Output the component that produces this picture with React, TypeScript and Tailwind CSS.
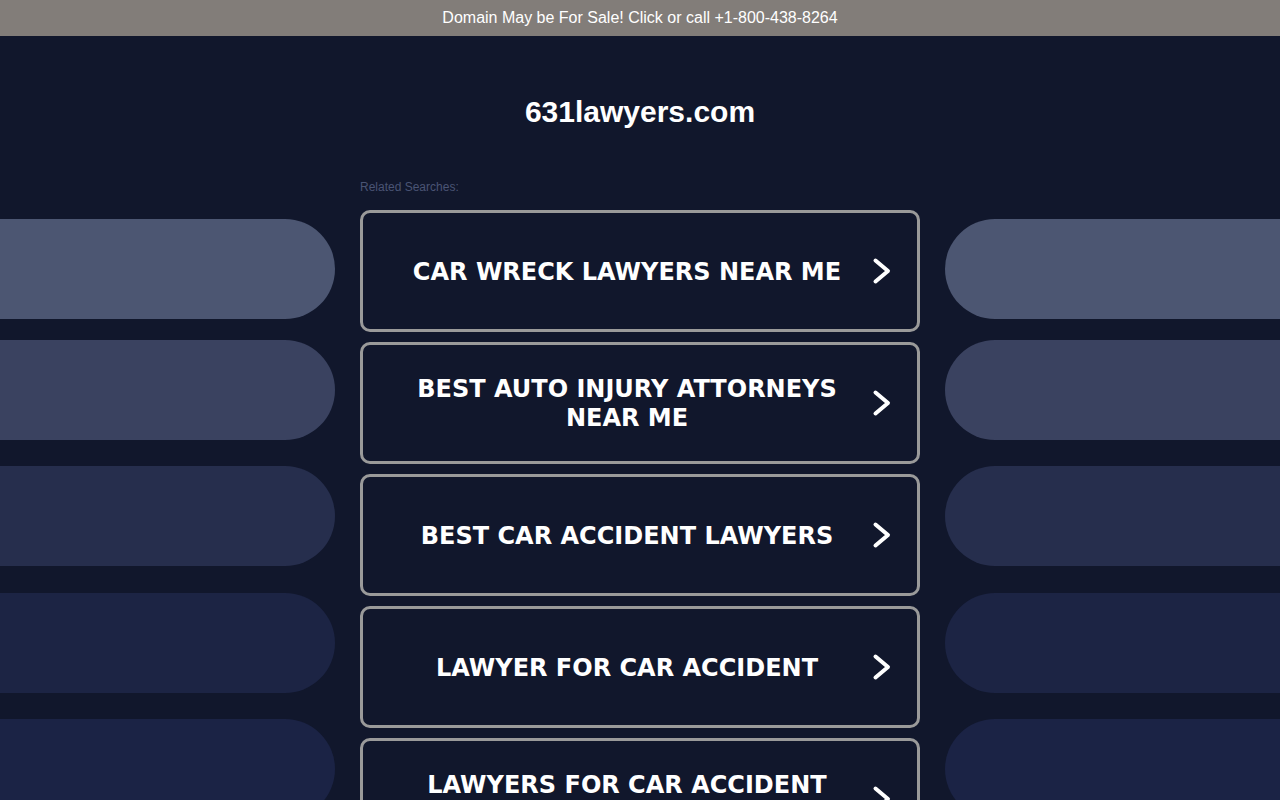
const searches = [
  "CAR WRECK LAWYERS NEAR ME",
  "BEST AUTO INJURY ATTORNEYS NEAR ME",
  "BEST CAR ACCIDENT LAWYERS",
  "LAWYER FOR CAR ACCIDENT",
  "LAWYERS FOR CAR ACCIDENT INJURIES",
];

const pills = [
  "mt-[42px] bg-[#4c5672]",
  "mt-[21px] bg-[#3a4260]",
  "mt-[26px] bg-[#262e4d]",
  "mt-[27px] bg-[#1c2444]",
  "mt-[26px] bg-[#1b2345]",
];

function Chevron() {
  return (
    <svg width="20" height="30" viewBox="0 0 20 30" className="shrink-0">
      <polyline
        points="4.5,4.5 17,15 4.5,25.5"
        fill="none"
        stroke="#ffffff"
        strokeWidth="4"
        strokeLinecap="round"
        strokeLinejoin="round"
      />
    </svg>
  );
}

function SidePills({ side }: { side: "left" | "right" }) {
  return (
    <div className="flex flex-1 flex-col">
      {pills.map((cls, i) => (
        <div
          key={i}
          className={`h-[100px] w-full shrink-0 ${cls} ${
            side === "left" ? "rounded-r-[50px]" : "rounded-l-[50px]"
          }`}
        />
      ))}
    </div>
  );
}

export default function App() {
  return (
    <div className="min-h-screen overflow-hidden bg-[#11172c] font-['Liberation_Sans',Arial,sans-serif]">
      <div className="flex h-[36px] items-center justify-center bg-[#827d79] text-[16px] text-white">
        Domain May be For Sale! Click or call +1-800-438-8264
      </div>

      <h1 className="mt-[58px] text-center text-[30px] font-bold leading-[36px] text-white">
        631lawyers.com
      </h1>

      <div className="mt-[47px] flex gap-[25px]">
        <SidePills side="left" />

        <div className="flex w-[560px] shrink-0 flex-col">
          <p className="text-[12px] leading-[20px] text-[#4a5474]">Related Searches:</p>
          <div className="mt-[13px] flex flex-col gap-[10px]">
            {searches.map((s) => (
              <a
                key={s}
                href="#"
                className="flex h-[122px] items-center rounded-[10px] border-[3px] border-[#9a9a9a] pl-[20px] pr-[26px]"
              >
                <span className="flex-1 pt-[2px] text-center font-['DejaVu_Sans',Verdana,sans-serif] text-[24px] font-bold leading-[29px] text-white">
                  {s}
                </span>
                <Chevron />
              </a>
            ))}
          </div>
        </div>

        <SidePills side="right" />
      </div>
    </div>
  );
}
